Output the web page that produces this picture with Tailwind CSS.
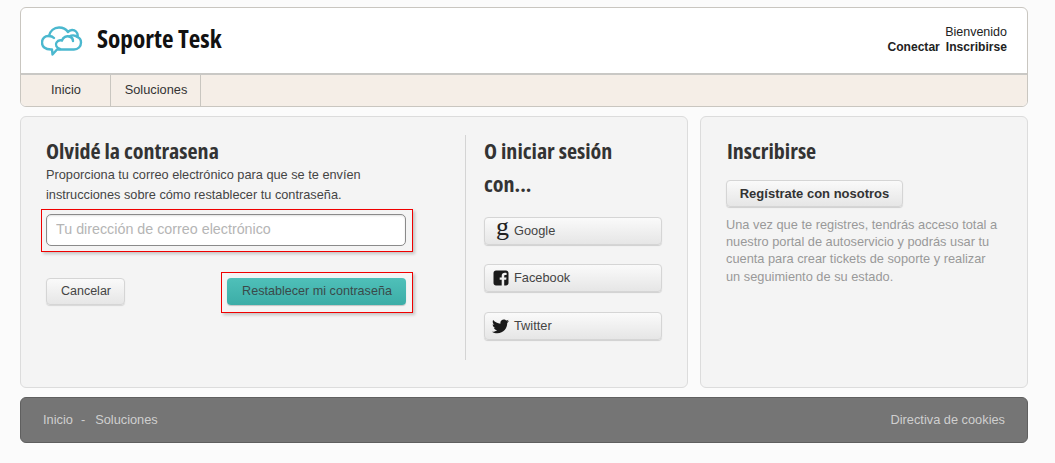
<!DOCTYPE html>
<html lang="es">
<head>
<meta charset="utf-8">
<script src="https://cdn.jsdelivr.net/npm/@tailwindcss/browser@4"></script>
<title>Soporte Tesk</title>
</head>
<body class="bg-[#fbfbfb] font-['Liberation_Sans',Arial,sans-serif] text-[13px] text-[#333] h-[463px] overflow-hidden">
<div class="w-[1008px] ml-[20px] pt-[7px]">
  <header class="h-[100px] border border-[#c9c6c0] rounded-[6px] overflow-hidden bg-white flex flex-col">
    <div class="h-[65px] flex items-center justify-between pl-[20px] pr-[20px]">
      <div class="flex items-center">
        <svg class="w-[42px] h-[33px] mt-[-1px]" viewBox="0 0 42 33" fill="none" stroke="#4bb8cf" stroke-width="2.4" stroke-linecap="round" stroke-linejoin="round">
          <path d="M10 25.5C4 25.5 1 22.5 1 18.5C1 14.500 4 11.500 8 12C9 7 13 3.500 18 3.500C22 3.500 25 5 27 8C29 5.500 33 5.500 35 7.500C36.500 9 37 11 36.500 13C39 14 40 16.500 40 18.500C40 22.500 37 25.500 33 25.500L16 25.500L11.500 30.500L11 25.500Z"/>
          <path d="M19 25C15.500 24 14 21 15.500 18.500C17 16 19.500 16 21 16.500C22 13 25.500 11.500 28.500 12.500C31 13.300 32 15 32 17"/>
          <path d="M8 12C9.500 12 11.500 12.500 13 14"/>
          <path d="M28.500 12.500C30.500 11 34 11 36.500 13"/>
        </svg>
        <div class="ml-[14px] font-['Open_Sans',sans-serif] font-bold text-[25.2px] leading-[32px] text-[#111] [font-stretch:75%] mt-[-6px]">Soporte Tesk</div>
      </div>
      <div class="text-right text-[12.5px] leading-[15px] text-[#222] mt-[-2px]">
        <div>Bienvenido</div>
        <div class="font-bold text-[12.1px] flex gap-[6px] justify-end"><a>Conectar</a><a>Inscribirse</a></div>
      </div>
    </div>
    <nav class="flex-1 bg-[#f5eee7] border-t-2 border-[#c9c8c5] flex text-[12.8px] text-[#333]">
      <a class="w-[90px] border-r border-[#c9c6c0] flex items-center justify-center pb-[2px] pl-[1px]">Inicio</a>
      <a class="w-[90px] border-r border-[#c9c6c0] flex items-center justify-center pb-[2px] pl-[1px]">Soluciones</a>
    </nav>
  </header>

  <main class="mt-[9px] flex gap-[12px] h-[272px]">
    <section class="w-[668px] bg-[#f4f4f4] border border-[#dcdcdc] rounded-[6px] flex pl-[25px] pt-[17px] pb-[27px]">
      <div class="w-[360px] pt-0">
        <h2 class="font-['Open_Sans',sans-serif] font-bold text-[22px] leading-[32px] text-[#333] [font-stretch:75%]">Olvidé la contrasena</h2>
        <p class="text-[12.75px] leading-[19.5px] mt-[-1px] text-[#444]">Proporciona tu correo electrónico para que se te envíen<br>instrucciones sobre cómo restablecer tu contraseña.</p>
        <div class="relative mt-[10px]">
          <input class="block w-[360px] h-[32px] bg-white border border-[#8a8a8a] rounded-[5px] px-[9px] pb-[2px] text-[14.3px] placeholder:text-[#b5b5b5] shadow-[inset_0_1px_2px_rgba(0,0,0,0.12)]" placeholder="Tu dirección de correo electrónico">
          <div class="absolute left-[-5px] top-[-5px] w-[372px] h-[43px] border border-[#f00000] shadow-[2px_2px_3px_rgba(0,0,0,0.2)]"></div>
        </div>
        <div class="flex justify-between mt-[32px]">
          <button class="w-[79px] h-[27px] rounded-[4px] border border-[#d5d5d5] bg-gradient-to-b from-[#fafafa] to-[#e6e6e6] text-[12.5px] pl-[1px] text-[#444] shadow-[0_1px_1px_rgba(0,0,0,0.12)]">Cancelar</button>
          <div class="relative">
            <button class="block w-[179px] h-[27px] rounded-[4px] bg-gradient-to-b from-[#4fc0b9] to-[#3cada7] text-[12.6px] pl-[1px] text-[#3a4a4a] shadow-[0_1px_1px_rgba(0,0,0,0.2)]">Restablecer mi contraseña</button>
            <div class="absolute left-[-6px] top-[-6px] w-[192px] h-[41px] border border-[#f00000] shadow-[2px_2px_3px_rgba(0,0,0,0.2)]"></div>
          </div>
        </div>
      </div>
      <div class="w-px bg-[#d4d4d4] ml-[59px] mt-[1px]"></div>
      <div class="ml-[18px] w-[178px]">
        <h2 class="font-['Open_Sans',sans-serif] font-bold text-[22px] leading-[33px] text-[#333] [font-stretch:75%]">O iniciar sesión<br>con...</h2>
        <div class="mt-[17px] flex flex-col gap-[19px] text-[12.8px] text-[#444]">
          <button class="h-[28px] rounded-[4px] border border-[#d5d5d5] bg-gradient-to-b from-[#fafafa] to-[#e6e6e6] shadow-[0_1px_1px_rgba(0,0,0,0.15)] flex items-center">
            <span class="w-[29px] text-center font-['Liberation_Serif',serif] text-[26px] leading-[24px] text-[#222] mt-[-8px] pl-[6px]">g</span>Google
          </button>
          <button class="h-[28px] rounded-[4px] border border-[#d5d5d5] bg-gradient-to-b from-[#fafafa] to-[#e6e6e6] shadow-[0_1px_1px_rgba(0,0,0,0.15)] flex items-center">
            <span class="w-[29px] flex justify-center pl-[2px]"><svg class="w-[16px] h-[16px]" viewBox="0 0 16 16"><path fill="#1a1a1a" d="M3 0.5H13C14.4 0.5 15.5 1.6 15.5 3V13C15.5 14.4 14.4 15.5 13 15.5H11.2V9.8H13.2L13.5 7.5H11.2V6.1C11.2 5.4 11.4 5 12.4 5H13.6V2.9C13.4 2.9 12.7 2.8 11.8 2.8C10 2.8 8.7 3.9 8.7 5.9V7.5H6.7V9.8H8.7V15.5H3C1.6 15.5 0.5 14.4 0.5 13V3C0.5 1.6 1.6 0.5 3 0.5Z"/></svg></span>Facebook
          </button>
          <button class="mt-[1px] h-[28px] rounded-[4px] border border-[#d5d5d5] bg-gradient-to-b from-[#fafafa] to-[#e6e6e6] shadow-[0_1px_1px_rgba(0,0,0,0.15)] flex items-center">
            <span class="w-[29px] flex justify-center pl-[2px]"><svg class="w-[17px] h-[15px]" viewBox="0 0 24 20"><path fill="#1a1a1a" d="M24 2.4c-.9.4-1.8.7-2.8.8 1-.6 1.800-1.600 2.200-2.700-.9.600-2 1-3.100 1.200C19.400.7 18.100 0 16.700 0c-2.700 0-4.900 2.200-4.900 4.900 0 .4 0 .8.100 1.100C7.800 5.800 4.200 3.900 1.700.9c-.4.700-.7 1.600-.7 2.500 0 1.700.9 3.200 2.200 4.100-.8 0-1.600-.2-2.200-.6v.1c0 2.400 1.700 4.400 3.900 4.800-.4.100-.8.200-1.300.2-.3 0-.6 0-.9-.1.600 2 2.400 3.400 4.600 3.400-1.700 1.300-3.800 2.100-6.100 2.100-.4 0-.8 0-1.200-.1C2.200 18.700 4.800 19.500 7.500 19.500c9.100 0 14-7.500 14-14v-.6c1-.7 1.800-1.600 2.500-2.500z"/></svg></span>Twitter
          </button>
        </div>
      </div>
    </section>
    <aside class="w-[328px] bg-[#f4f4f4] border border-[#dcdcdc] rounded-[6px] pl-[25px] pt-[17px]">
      <h2 class="ml-[1px] font-['Open_Sans',sans-serif] font-bold text-[22px] leading-[32px] text-[#333] [font-stretch:75%]">Inscribirse</h2>
      <button class="mt-[14px] w-[177px] h-[27px] rounded-[4px] border border-[#d5d5d5] bg-gradient-to-b from-[#fafafa] to-[#e6e6e6] text-[13px] font-bold text-[#333] shadow-[0_1px_1px_rgba(0,0,0,0.15)]">Regístrate con nosotros</button>
      <p class="mt-[9px] text-[12.8px] leading-[17.2px] text-[#999]">Una vez que te registres, tendrás acceso total a<br>nuestro portal de autoservicio y podrás usar tu<br>cuenta para crear tickets de soporte y realizar<br>un seguimiento de su estado.</p>
    </aside>
  </main>

  <footer class="mt-[9px] h-[46px] bg-[#757575] border border-[#5f5f5f] rounded-[6px] flex items-center justify-between px-[22px] text-[12.8px] text-[#cfcfcf]">
    <div class="flex pb-[1px]"><a>Inicio</a><span class="ml-[8px] mr-[10px]">-</span><a>Soluciones</a></div>
    <a class="pb-[1px]">Directiva de cookies</a>
  </footer>
</div>
</body>
</html>
